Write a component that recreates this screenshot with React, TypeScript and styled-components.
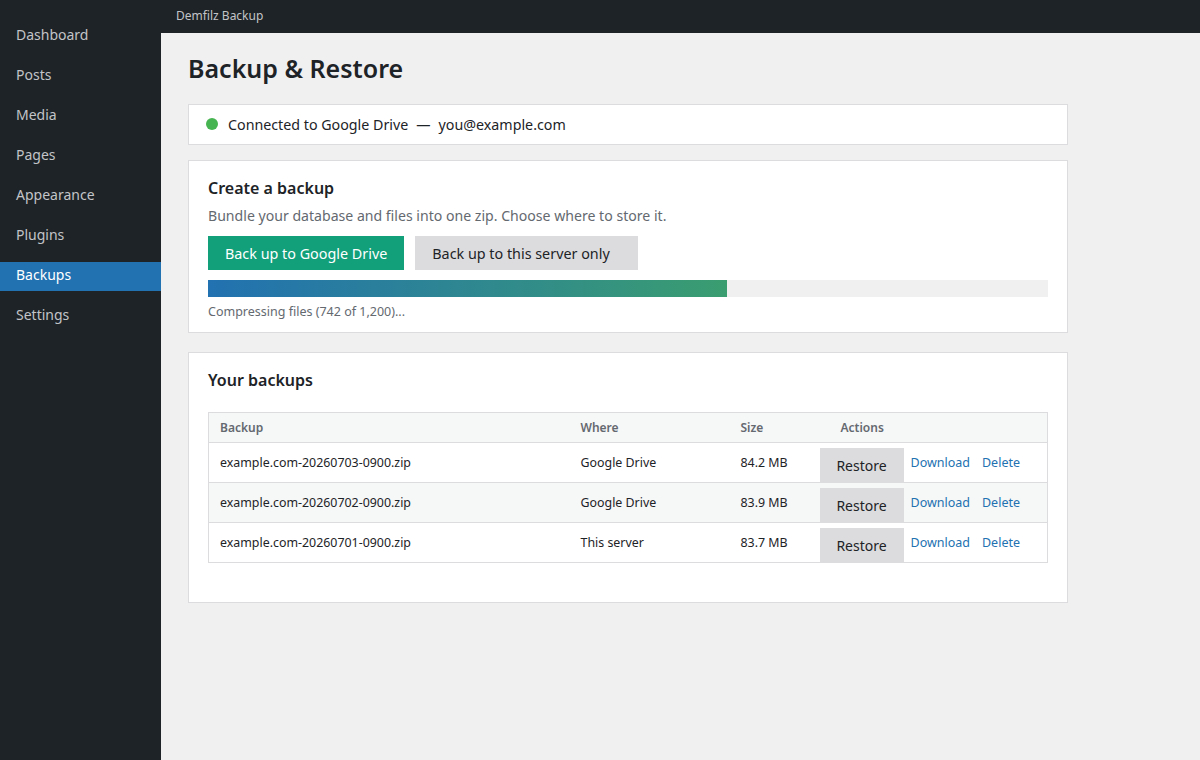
import styled, { createGlobalStyle } from "styled-components";

const GlobalStyle = createGlobalStyle`
  html, body {
    margin: 0;
    padding: 0;
    background: #f0f0f1;
    font-family: "Noto Sans", "Open Sans", sans-serif;
    color: #1d2327;
  }
  * { box-sizing: border-box; }
`;

const menu = ["Dashboard", "Posts", "Media", "Pages", "Appearance", "Plugins", "Backups", "Settings"];

const backups = [
  { name: "example.com-20260703-0900.zip", where: "Google Drive", size: "84.2 MB" },
  { name: "example.com-20260702-0900.zip", where: "Google Drive", size: "83.9 MB" },
  { name: "example.com-20260701-0900.zip", where: "This server", size: "83.7 MB" },
];

const progress = 742 / 1200;

const App = () => {
  return (
    <Page>
      <GlobalStyle />
      <Sidebar>
        {menu.map((item) => (
          <MenuItem key={item} active={item === "Backups"}>
            {item}
          </MenuItem>
        ))}
      </Sidebar>
      <Main>
        <TopBar>Demfilz Backup</TopBar>
        <Content>
          <PageTitle>Backup &amp; Restore</PageTitle>

          <StatusCard>
            <Dot />
            <span>Connected to Google Drive</span>
            <Dash>—</Dash>
            <span>you@example.com</span>
          </StatusCard>

          <Card>
            <CardTitle>Create a backup</CardTitle>
            <Hint>Bundle your database and files into one zip. Choose where to store it.</Hint>
            <ButtonRow>
              <Button primary>Back up to Google Drive</Button>
              <Button width={223}>Back up to this server only</Button>
            </ButtonRow>
            <Track>
              <Fill style={{ width: `${progress * 100}%` }} />
            </Track>
            <ProgressText>Compressing files (742 of 1,200)...</ProgressText>
          </Card>

          <BackupsCard>
            <CardTitle>Your backups</CardTitle>
            <Table>
              <colgroup>
                <Col width={361} />
                <Col width={160} />
                <Col width={80} />
                <col />
              </colgroup>
              <thead>
                <tr>
                  <Th>Backup</Th>
                  <Th>Where</Th>
                  <Th>Size</Th>
                  <Th actions>Actions</Th>
                </tr>
              </thead>
              <tbody>
                {backups.map((b, i) => (
                  <Row key={b.name} striped={i % 2 === 1}>
                    <Td>{b.name}</Td>
                    <Td>{b.where}</Td>
                    <Td>{b.size}</Td>
                    <ActionTd>
                      <Actions>
                        <RestoreButton>Restore</RestoreButton>
                        <Link>Download</Link>
                        <Link>Delete</Link>
                      </Actions>
                    </ActionTd>
                  </Row>
                ))}
              </tbody>
            </Table>
          </BackupsCard>
        </Content>
      </Main>
    </Page>
  );
};

export default App;

const Page = styled.div`
  display: flex;
  min-height: 760px;
`;

const Sidebar = styled.nav`
  width: 161px;
  flex-shrink: 0;
  background: #1d2327;
  padding-top: 22px;
  display: flex;
  flex-direction: column;
  gap: 11px;
`;

const MenuItem = styled.div<{ active?: boolean }>`
  height: 29px;
  line-height: 26px;
  padding-left: 16px;
  font-size: 14px;
  color: ${(p) => (p.active ? "#ffffff" : "#c3c4c7")};
  background: ${(p) => (p.active ? "#2271b1" : "transparent")};
`;

const Main = styled.div`
  flex: 1;
  display: flex;
  flex-direction: column;
`;

const TopBar = styled.div`
  height: 33px;
  background: #1d2327;
  color: #c3c4c7;
  font-size: 12px;
  line-height: 32px;
  padding-left: 15px;
`;

const Content = styled.main`
  padding: 17px 27px 40px;
  display: flex;
  flex-direction: column;
  gap: 15px;
  width: 934px;
`;

const PageTitle = styled.h1`
  margin: 0 0 3px;
  font-size: 25px;
  font-weight: 600;
  line-height: 36px;
  color: #1d2327;
`;

const StatusCard = styled.div`
  height: 41px;
  background: #fff;
  border: 1px solid #dcdcde;
  display: flex;
  align-items: center;
  padding-left: 17px;
  padding-bottom: 1px;
  font-size: 14.25px;
  color: #1d2327;
`;

const Dot = styled.span`
  width: 12px;
  height: 12px;
  border-radius: 50%;
  background: #46b450;
  margin-right: 10px;
`;

const Dash = styled.span`
  margin: 0 8px;
`;

const Card = styled.section`
  background: #fff;
  border: 1px solid #dcdcde;
  padding: 16px 19px 12px;
  display: flex;
  flex-direction: column;
`;

const BackupsCard = styled(Card)`
  margin-top: 4px;
  padding-bottom: 39px;
`;

const CardTitle = styled.h2`
  margin: 0;
  font-size: 16px;
  font-weight: 600;
  line-height: 22px;
  color: #1d2327;
`;

const Hint = styled.p`
  margin: 7px 0 0;
  font-size: 14.1px;
  line-height: 20px;
  color: #646970;
`;

const ButtonRow = styled.div`
  display: flex;
  gap: 11px;
  margin-top: 10px;
`;

const Button = styled.button<{ primary?: boolean; width?: number }>`
  height: 34px;
  width: ${(p) => (p.width ? `${p.width}px` : "auto")};
  border: none;
  padding: 0 17px;
  text-align: left;
  font-family: inherit;
  font-size: 14.35px;
  background: ${(p) => (p.primary ? "#11a07a" : "#dcdcde")};
  color: ${(p) => (p.primary ? "#ffffff" : "#1d2327")};
  cursor: pointer;
`;

const Track = styled.div`
  margin-top: 10px;
  height: 17px;
  background: #f0f0f1;
`;

const Fill = styled.div`
  height: 100%;
  background: linear-gradient(90deg, #2271b1, #3a9d70);
`;

const ProgressText = styled.div`
  margin-top: 6px;
  font-size: 12.5px;
  line-height: 17px;
  color: #646970;
`;

const Table = styled.table`
  margin-top: 21px;
  width: 100%;
  table-layout: fixed;
  border-collapse: collapse;
  border: 1px solid #dcdcde;
  font-size: 12.4px;
  color: #1d2327;
`;

const Col = styled.col<{ width: number }>`
  width: ${(p) => p.width}px;
`;

const Th = styled.th<{ actions?: boolean }>`
  height: 30px;
  padding: 0 0 0 ${(p) => (p.actions ? "31px" : "11px")};
  text-align: left;
  font-size: 12px;
  font-weight: 600;
  color: #646970;
  background: #f6f7f7;
  border-bottom: 1px solid #dcdcde;
`;

const Row = styled.tr<{ striped?: boolean }>`
  background: ${(p) => (p.striped ? "#f6f7f7" : "#ffffff")};
  border-bottom: 1px solid #dcdcde;
`;

const Td = styled.td`
  height: 39px;
  padding: 0 0 0 11px;
  white-space: nowrap;
`;

const ActionTd = styled(Td)`
  padding-left: 10px;
`;

const Actions = styled.div`
  height: 39px;
  display: flex;
  align-items: center;
  gap: 12px;
`;

const RestoreButton = styled.button`
  align-self: flex-start;
  margin-top: 5px;
  margin-right: -5px;
  width: 84px;
  height: 34px;
  border: none;
  background: #dcdcde;
  color: #1d2327;
  font-family: inherit;
  font-size: 14px;
  cursor: pointer;
`;

const Link = styled.a`
  color: #2271b1;
  font-size: 12.5px;
  text-decoration: none;
  cursor: pointer;
`;
